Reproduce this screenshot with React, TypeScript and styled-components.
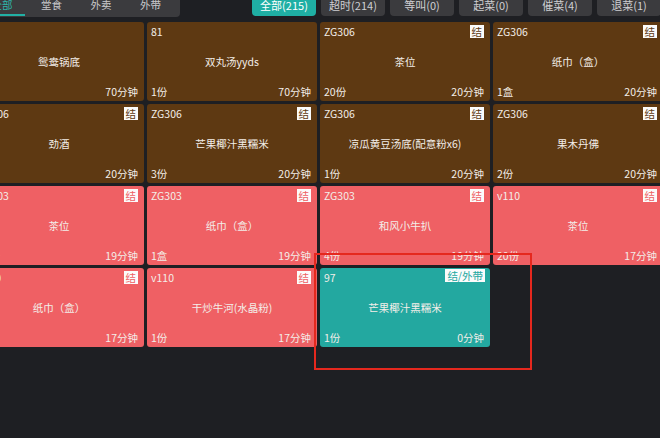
import React from "react";
import styled, { createGlobalStyle } from "styled-components";

const GlobalStyle = createGlobalStyle`
  html, body {
    margin: 0;
    padding: 0;
    background: #1e1f23;
    overflow: hidden;
    font-family: "Noto Sans CJK SC", "Noto Sans", sans-serif;
  }
`;

const Page = styled.div`
  position: relative;
  margin-left: -26px;
  width: 687px;
  height: 438px;
`;

const TopBar = styled.div`
  display: flex;
  height: 17px;
`;

const TabPanel = styled.div`
  display: flex;
  gap: 3.5px;
  width: 206px;
  padding-left: 5px;
  box-sizing: border-box;
  background: #3b3b3e;
  border-radius: 0 0 4px 0;
`;

const Tab = styled.div<{ $active?: boolean }>`
  width: 46px;
  height: 16px;
  text-align: center;
  font-size: 10.5px;
  line-height: 10px;
  color: ${(p) => (p.$active ? "#2fb7ab" : "#c9c9cc")};
  border-bottom: 2px solid ${(p) => (p.$active ? "#22b0a5" : "transparent")};
  box-sizing: border-box;
`;

const Buttons = styled.div`
  display: flex;
  gap: 5px;
  margin-left: auto;
`;

const FilterButton = styled.div<{ $active?: boolean }>`
  width: 64px;
  height: 16px;
  border-radius: 0 0 4px 4px;
  background: ${(p) => (p.$active ? "#1fafa4" : "#3b3b3e")};
  color: ${(p) => (p.$active ? "#ffffff" : "#cfcfd2")};
  font-size: 11px;
  line-height: 10px;
  text-align: center;
`;

const Grid = styled.div`
  display: grid;
  grid-template-columns: repeat(4, 170px);
  grid-auto-rows: 79px;
  gap: 3px;
  margin-top: 5px;
`;

type Tone = "brown" | "red" | "teal";

const toneColor: Record<Tone, string> = {
  brown: "#5e3912",
  red: "#ef6064",
  teal: "#23a8a0",
};

const TileBox = styled.div<{ $tone: Tone }>`
  background: ${(p) => toneColor[p.$tone]};
  border-radius: 3px;
  display: flex;
  flex-direction: column;
  padding: 3px 6px 2px 4px;
  box-sizing: border-box;
  color: #f3eee9;
  font-size: 10.5px;
  line-height: 14px;
`;

const TileHead = styled.div`
  display: flex;
  justify-content: space-between;
  align-items: flex-start;
  height: 14px;
`;

const Badge = styled.span<{ $tone: Tone; $flush?: boolean }>`
  background: #fbfbfb;
  color: ${(p) => toneColor[p.$tone]};
  height: 13px;
  line-height: 13px;
  padding: 0 2px;
  font-size: 10.5px;
  margin-top: ${(p) => (p.$flush ? "-2px" : "0")};
  margin-right: ${(p) => (p.$flush ? "-1px" : "0")};
`;

const TileName = styled.div`
  flex: 1;
  display: flex;
  align-items: center;
  justify-content: center;
  padding-left: 2px;
`;

const TileFoot = styled.div`
  display: flex;
  justify-content: space-between;
`;

const Annotation = styled.div`
  position: absolute;
  left: 340px;
  top: 253px;
  width: 218px;
  height: 117px;
  border: 2px solid #e5281e;
  box-sizing: border-box;
  pointer-events: none;
`;

type Item = {
  code: string;
  name: string;
  qty: string;
  time: string;
  tone: Tone;
  badge?: string;
};

const items: Item[] = [
  { code: "81", name: "鸳鸯锅底", qty: "1份", time: "70分钟", tone: "brown" },
  { code: "81", name: "双丸汤yyds", qty: "1份", time: "70分钟", tone: "brown" },
  { code: "ZG306", name: "茶位", qty: "20份", time: "20分钟", tone: "brown", badge: "结" },
  { code: "ZG306", name: "纸巾（盒）", qty: "1盒", time: "20分钟", tone: "brown", badge: "结" },
  { code: "ZG306", name: "劲酒", qty: "1份", time: "20分钟", tone: "brown", badge: "结" },
  { code: "ZG306", name: "芒果椰汁黑糯米", qty: "3份", time: "20分钟", tone: "brown", badge: "结" },
  { code: "ZG306", name: "凉瓜黄豆汤底(配意粉x6)", qty: "1份", time: "20分钟", tone: "brown", badge: "结" },
  { code: "ZG306", name: "果木丹佛", qty: "2份", time: "20分钟", tone: "brown", badge: "结" },
  { code: "ZG303", name: "茶位", qty: "20份", time: "19分钟", tone: "red", badge: "结" },
  { code: "ZG303", name: "纸巾（盒）", qty: "1盒", time: "19分钟", tone: "red", badge: "结" },
  { code: "ZG303", name: "和风小牛扒", qty: "4份", time: "19分钟", tone: "red", badge: "结" },
  { code: "v110", name: "茶位", qty: "20份", time: "17分钟", tone: "red", badge: "结" },
  { code: "v110", name: "纸巾（盒）", qty: "1盒", time: "17分钟", tone: "red", badge: "结" },
  { code: "v110", name: "干炒牛河(水晶粉)", qty: "1份", time: "17分钟", tone: "red", badge: "结" },
  { code: "97", name: "芒果椰汁黑糯米", qty: "1份", time: "0分钟", tone: "teal", badge: "结/外带" },
];

const tabs = ["全部", "堂食", "外卖", "外带"];
const filters = ["全部(215)", "超时(214)", "等叫(0)", "起菜(0)", "催菜(4)", "退菜(1)"];

function Tile({ item }: { item: Item }) {
  return (
    <TileBox $tone={item.tone}>
      <TileHead>
        <span>{item.code}</span>
        {item.badge && (
          <Badge $tone={item.tone} $flush={item.tone === "teal"}>
            {item.badge}
          </Badge>
        )}
      </TileHead>
      <TileName>{item.name}</TileName>
      <TileFoot>
        <span>{item.qty}</span>
        <span>{item.time}</span>
      </TileFoot>
    </TileBox>
  );
}

export default function App() {
  return (
    <>
      <GlobalStyle />
      <Page>
        <TopBar>
          <TabPanel>
            {tabs.map((t, i) => (
              <Tab key={t} $active={i === 0}>
                {t}
              </Tab>
            ))}
          </TabPanel>
          <Buttons>
            {filters.map((f, i) => (
              <FilterButton key={f} $active={i === 0}>
                {f}
              </FilterButton>
            ))}
          </Buttons>
        </TopBar>
        <Grid>
          {items.map((it, i) => (
            <Tile key={i} item={it} />
          ))}
        </Grid>
        <Annotation />
      </Page>
    </>
  );
}
